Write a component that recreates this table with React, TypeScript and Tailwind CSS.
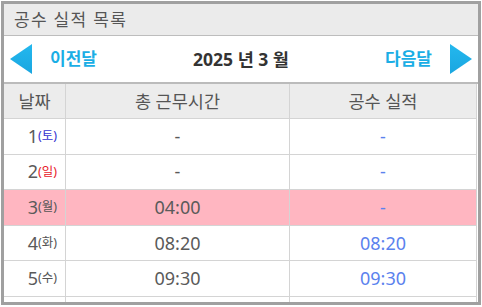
const rows = [
  { day: 1, dow: '토', total: '-', result: '-', hl: false },
  { day: 2, dow: '일', total: '-', result: '-', hl: false },
  { day: 3, dow: '월', total: '04:00', result: '-', hl: true },
  { day: 4, dow: '화', total: '08:20', result: '08:20', hl: false },
  { day: 5, dow: '수', total: '09:30', result: '09:30', hl: false },
]

const dowColor = (d: string) => (d === '토' ? 'text-[#3434d0]' : d === '일' ? 'text-[#e8202a]' : 'text-[#555]')

function Triangle({ dir }: { dir: 'left' | 'right' }) {
  return (
    <svg width="22" height="30" viewBox="0 0 22 30">
      <defs>
        <linearGradient id={`g-${dir}`} x1="0" y1="0" x2="0" y2="1">
          <stop offset="0" stopColor="#24b8ee" />
          <stop offset="1" stopColor="#1aa6e0" />
        </linearGradient>
      </defs>
      <polygon points={dir === 'left' ? '22,0 0,15 22,30' : '0,0 22,15 0,30'} fill={`url(#g-${dir})`} />
    </svg>
  )
}

export default function App() {
  return (
    <div
      className="w-[482px] h-[307px] bg-white pt-px pl-px"
      style={{ fontFamily: '"Noto Sans", "Noto Sans CJK KR", sans-serif' }}
    >
      <div className="w-[480px] h-[304px] border-[3px] border-[#a0a0a0] overflow-hidden flex flex-col">
        <div className="h-[32px] shrink-0 bg-[#ebebeb] border-b border-[#bdbdbd] flex items-center pl-[10px] text-[17px] tracking-[1.3px] text-[#555]">
          공수 실적 목록
        </div>

        <div className="h-[48px] shrink-0 border-b-2 border-[#bbb] flex items-center px-[6px]">
          <Triangle dir="left" />
          <span className="ml-[18px] text-[17px] font-bold text-[#1aaee5]">이전달</span>
          <span className="flex-1 text-center text-[17.5px] font-bold text-[#333]">2025 년 3 월</span>
          <span className="mr-[18px] text-[17px] font-bold text-[#1aaee5]">다음달</span>
          <Triangle dir="right" />
        </div>

        <div className="w-[473px] border-r border-[#d4d4d4]">
          <div className="grid grid-cols-[62px_224px_1fr] h-[35px] bg-[#ececec] border-b border-[#d4d4d4] text-[17.5px] text-[#555]">
            <div className="flex items-center justify-center border-r border-[#d4d4d4]">날짜</div>
            <div className="flex items-center justify-center border-r border-[#d4d4d4]">총 근무시간</div>
            <div className="flex items-center justify-center">공수 실적</div>
          </div>
          {rows.map((r) => (
            <div
              key={r.day}
              className={`grid grid-cols-[62px_224px_1fr] h-[35.6px] border-b border-[#d4d4d4] ${r.hl ? 'bg-[#ffb6c1]' : 'bg-white'}`}
            >
              <div className="flex items-center justify-end pr-[8px] border-r border-[#d4d4d4] text-[#5a5a5a]">
                <span className="text-[18px]">{r.day}</span>
                <span className={`text-[12.5px] ${dowColor(r.dow)}`}>({r.dow})</span>
              </div>
              <div className="flex items-center justify-center border-r border-[#d4d4d4] text-[18px] text-[#5a5a5a]">
                {r.total}
              </div>
              <div className="flex items-center justify-center text-[18px] text-[#5b82ee]">{r.result}</div>
            </div>
          ))}
          <div className="grid grid-cols-[62px_224px_1fr] h-[35.6px] bg-white">
            <div className="border-r border-[#d4d4d4]" />
            <div className="border-r border-[#d4d4d4]" />
            <div />
          </div>
        </div>
      </div>
    </div>
  )
}
